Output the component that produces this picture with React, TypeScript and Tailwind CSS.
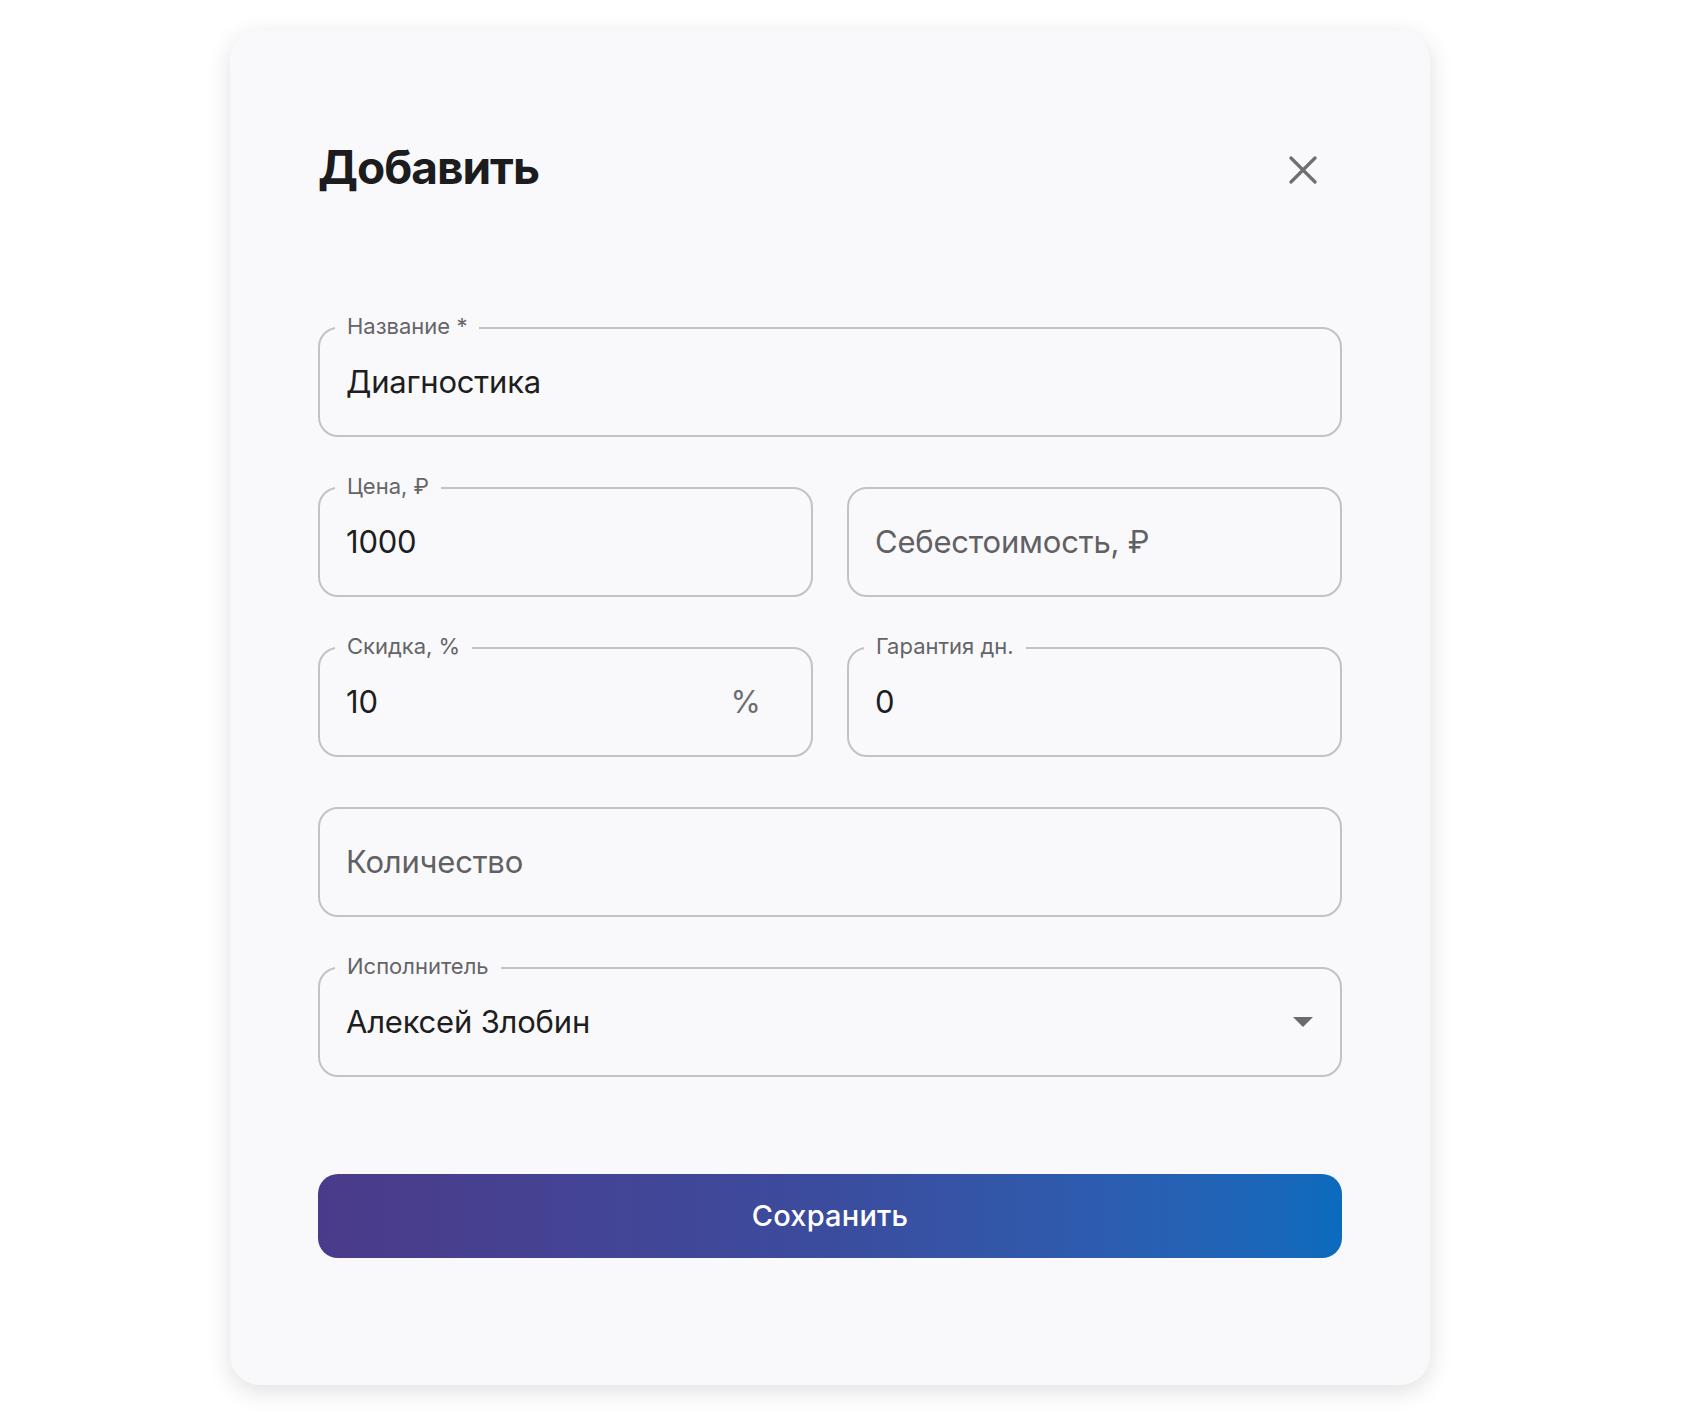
import React from 'react';

interface FieldProps {
  label?: string;
  value?: string;
  placeholder?: string;
  suffix?: string;
  select?: boolean;
  className?: string;
}

const Field: React.FC<FieldProps> = ({ label, value, placeholder, suffix, select, className }) => {
  return (
    <div
      className={`relative h-[110px] rounded-[20px] border-2 border-[#c3c3c6] flex items-center pl-[26px] ${
        suffix ? 'pr-[50px]' : 'pr-[25px]'
      } ${className ?? ''}`}
    >
      {label && (
        <span className="absolute -top-[17px] left-[15px] px-[12px] bg-[#f9f9fc] text-[22px] leading-[28px] text-[#656568] whitespace-nowrap">
          {label}
        </span>
      )}
      <span
        className={`flex-1 text-[31px] leading-[40px] tracking-[-0.2px] truncate ${
          value ? 'text-[#1e1e20]' : 'text-[#616164]'
        }`}
      >
        {value ?? placeholder}
      </span>
      {suffix && <span className="text-[31px] leading-[40px] text-[#6e6e72]">{suffix}</span>}
      {select && (
        <svg width="20" height="10" viewBox="0 0 20 10" className="mr-[2px]">
          <path d="M0 0 L20 0 L10 10 Z" fill="#6b6b6e" />
        </svg>
      )}
    </div>
  );
};

const App: React.FC = () => {
  return (
    <div
      className="min-h-[1416px] bg-white pt-[30px] pl-[230px]"
      style={{ fontFamily: 'Inter, "Noto Sans", sans-serif' }}
    >
      <div className="w-[1200px] rounded-[30px] bg-[#f9f9fc] shadow-[0_6px_24px_rgba(0,0,0,0.13)] pt-[113px] pb-[127px] px-[88px]">
        <div className="flex items-center justify-between h-[48px] pr-[25px]">
          <h1 className="text-[46px] leading-none font-bold text-[#1c1c1e] tracking-[-1px]">Добавить</h1>
          <button type="button" className="mt-[5px]">
            <svg width="28" height="28" viewBox="0 0 28 28">
              <path d="M2 2 L26 26 M26 2 L2 26" stroke="#6f6f72" strokeWidth="3.2" strokeLinecap="round" />
            </svg>
          </button>
        </div>

        <div className="mt-[136px] flex flex-col gap-[50px]">
          <Field label="Название *" value="Диагностика" />
          <div className="grid grid-cols-2 gap-[34px]">
            <Field label="Цена, ₽" value="1000" />
            <Field placeholder="Себестоимость, ₽" />
          </div>
          <div className="grid grid-cols-2 gap-[34px]">
            <Field label="Скидка, %" value="10" suffix="%" />
            <Field label="Гарантия дн." value="0" />
          </div>
          <Field placeholder="Количество" />
          <Field label="Исполнитель" value="Алексей Злобин" select />
        </div>

        <button
          type="button"
          className="mt-[97px] w-full h-[84px] rounded-[20px] bg-gradient-to-r from-[#4b3a8a] via-[#3b4c9e] to-[#0a6bbe] text-white text-[29px] font-medium tracking-[0.2px]"
        >
          Сохранить
        </button>
      </div>
    </div>
  );
};

export default App;
